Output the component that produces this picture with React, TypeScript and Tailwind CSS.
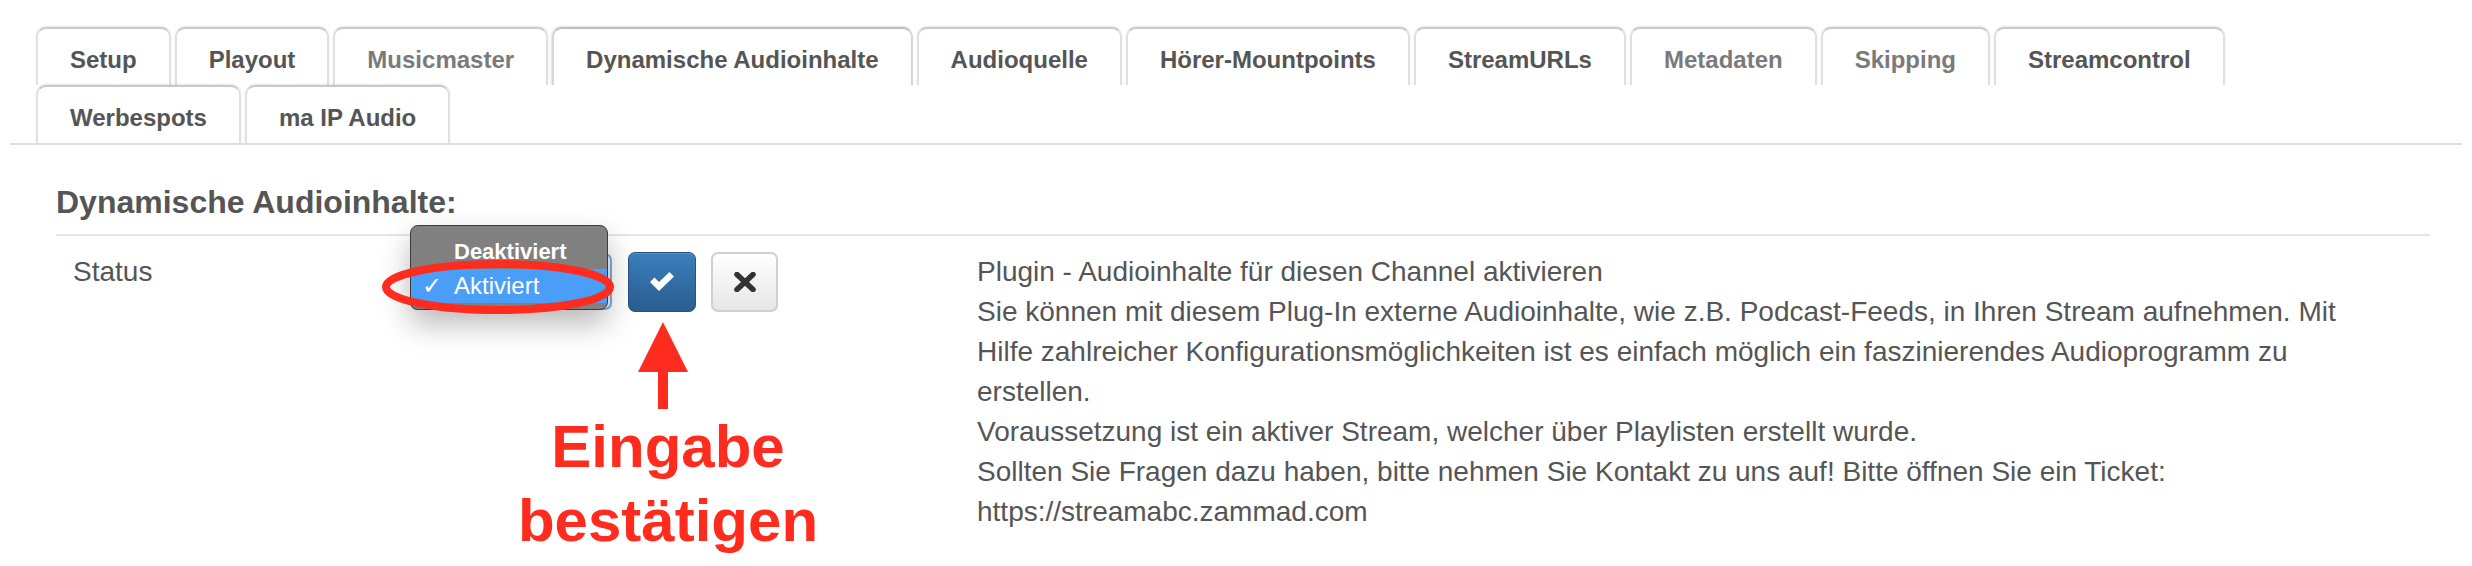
import React from "react";

type Tab = { label: string; muted?: boolean; active?: boolean };

const tabs: Tab[] = [
  { label: "Setup" },
  { label: "Playout" },
  { label: "Musicmaster", muted: true },
  { label: "Dynamische Audioinhalte", active: true },
  { label: "Audioquelle" },
  { label: "Hörer-Mountpoints" },
  { label: "StreamURLs" },
  { label: "Metadaten", muted: true },
  { label: "Skipping", muted: true },
  { label: "Streamcontrol" },
  { label: "Werbespots" },
  { label: "ma IP Audio" },
];

function TabItem({ tab }: { tab: Tab }) {
  return (
    <li
      className={
        "h-[58px] flex items-center px-[32px] pt-[6px] border-2 border-b-0 rounded-t-[10px] bg-white text-[24px] font-bold whitespace-nowrap " +
        (tab.active
          ? "border-[#d6d6d6] border-t-[#bdbdbd] shadow-[-1px_-1px_2px_rgba(0,0,0,0.12)] "
          : "border-[#e0e0e0] border-t-[#c9c9c9] shadow-[0_-1px_2px_rgba(0,0,0,0.10)] ") +
        (tab.muted ? "text-[#7a7a7a]" : "text-[#555555]")
      }
    >
      {tab.label}
    </li>
  );
}

export default function App() {
  return (
    <div className="relative w-[2472px] h-[566px] overflow-hidden bg-white font-['Liberation_Sans',Arial,sans-serif] text-[#555555]">
      {/* Tabs */}
      <ul className="mx-[10px] pl-[26px] pr-[200px] pt-[27px] flex flex-wrap gap-x-[4px] border-b-2 border-[#dddddd]">
        {tabs.map((t) => (
          <TabItem key={t.label} tab={t} />
        ))}
      </ul>

      {/* Content */}
      <div className="pl-[56px] pr-[42px] mt-[37px]">
        <h2 className="text-[32px] leading-[40px] font-bold text-[#555555] pb-[12px] border-b-2 border-[#e5e5e5]">
          Dynamische Audioinhalte:
        </h2>

        <div className="flex items-start mt-[16px]">
          <div className="w-[354px] pl-[17px] text-[28px] leading-[40px]">Status</div>

          <div className="w-[567px] flex items-start">
            {/* select (focused, native popup open) */}
            <div className="relative w-[202px] h-[57px] mt-[1px] rounded-[7px] border-2 border-[#74b0ea] bg-[#f4f4f4]">
              <div className="absolute left-[-2px] top-[-30px] w-[198px] h-[85px] rounded-[8px] border border-[#3c3c3c] bg-[#808080] pt-[8px] shadow-[0_14px_30px_rgba(0,0,0,0.28)] overflow-hidden">
                <div className="h-[35px] flex items-center pl-[43px] text-white text-[22px] font-bold">
                  Deaktiviert
                </div>
                <div className="h-[34px] flex items-center bg-[#4a9ef7] text-white text-[24px]">
                  <span className="w-[43px] pl-[11px] text-[24px] leading-none">✓</span>
                  <span>Aktiviert</span>
                </div>
              </div>
            </div>

            {/* confirm button */}
            <button className="ml-[16px] w-[68px] h-[60px] rounded-[7px] border border-[#25547f] bg-gradient-to-b from-[#3c7fbd] to-[#2a5d8e] flex items-center justify-center shadow-[inset_0_1px_0_rgba(255,255,255,0.15)]">
              <svg width="26" height="20" viewBox="0 0 26 20">
                <polygon points="1,10 5.5,5.5 10,10 20.5,0 25,4.5 10,19" fill="#ffffff" />
              </svg>
            </button>

            {/* cancel button */}
            <button className="ml-[15px] w-[67px] h-[60px] rounded-[7px] border-2 border-[#d0d0d0] bg-gradient-to-b from-[#ffffff] to-[#e6e6e6] flex items-center justify-center">
              <svg width="22" height="20" viewBox="0 0 22 20">
                <path d="M3 2.5 L19 17.5 M19 2.5 L3 17.5" stroke="#333333" strokeWidth="5.5" strokeLinecap="round" />
              </svg>
            </button>
          </div>

          <div className="text-[28px] leading-[40px] whitespace-nowrap">
            Plugin - Audioinhalte für diesen Channel aktivieren
            <br />
            Sie können mit diesem Plug-In externe Audioinhalte, wie z.B. Podcast-Feeds, in Ihren Stream aufnehmen. Mit
            <br />
            Hilfe zahlreicher Konfigurationsmöglichkeiten ist es einfach möglich ein faszinierendes Audioprogramm zu
            <br />
            erstellen.
            <br />
            Voraussetzung ist ein aktiver Stream, welcher über Playlisten erstellt wurde.
            <br />
            Sollten Sie Fragen dazu haben, bitte nehmen Sie Kontakt zu uns auf! Bitte öffnen Sie ein Ticket:
            <br />
            https://streamabc.zammad.com
          </div>
        </div>
      </div>

      {/* Annotation: red ellipse */}
      <svg className="absolute left-[378px] top-[257px]" width="240" height="60" viewBox="0 0 240 60">
        <ellipse cx="120" cy="30" rx="112" ry="23" fill="none" stroke="#fe2c1f" strokeWidth="8" />
      </svg>

      {/* Annotation: arrow */}
      <svg className="absolute left-[636px] top-[321px]" width="54" height="90" viewBox="0 0 54 90">
        <polygon points="27,1 52,51 2,51" fill="#fe2c1f" />
        <rect x="22" y="50" width="10" height="38" fill="#fe2c1f" />
      </svg>

      {/* Annotation: text */}
      <div className="absolute left-[468px] top-[410px] w-[400px] text-center text-[60px] leading-[74px] font-bold text-[#fe2c1f]">
        Eingabe
        <br />
        bestätigen
      </div>
    </div>
  );
}
